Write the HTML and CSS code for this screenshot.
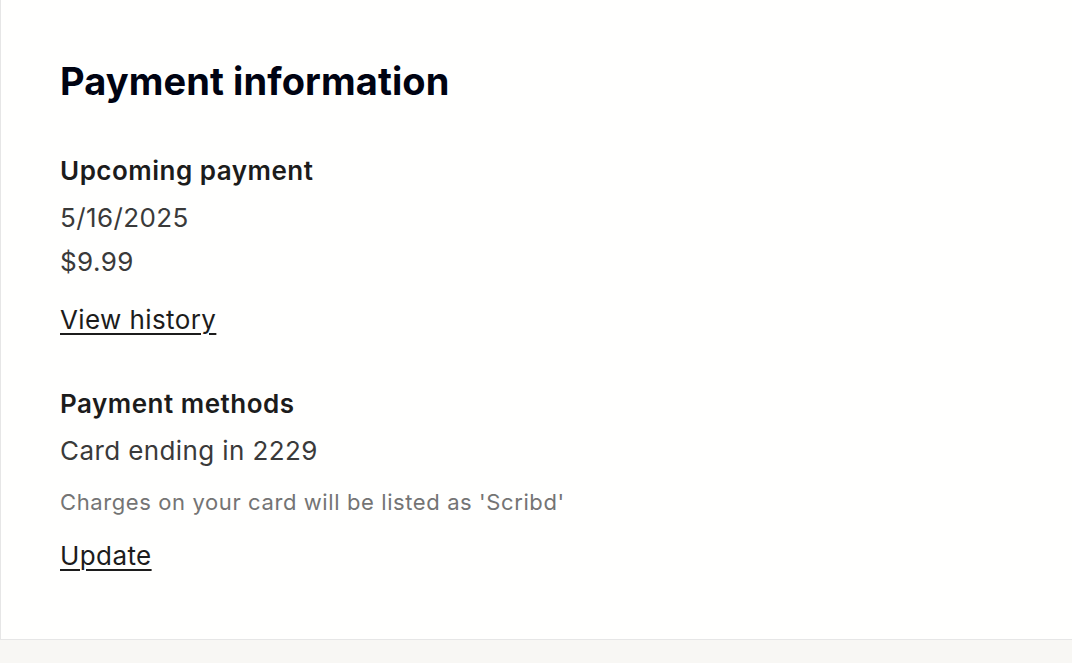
FILE: index.html
```html
<!DOCTYPE html>
<html lang="en">
<head>
    <meta charset="UTF-8">
    <meta name="viewport" content="width=device-width, initial-scale=1.0">
    <title>Payment information</title>
    <link rel="stylesheet" href="styles.css">
</head>
<body>
    <div class="card">
        <h1>Payment information</h1>
        <div class="section">
            <h2>Upcoming payment</h2>
            <p class="value first">5/16/2025</p>
            <p class="value">$9.99</p>
            <a class="link" href="#">View history</a>
        </div>
        <div class="section methods">
            <h2>Payment methods</h2>
            <p class="value first">Card ending in 2229</p>
            <p class="note">Charges on your card will be listed as 'Scribd'</p>
            <a class="link update" href="#">Update</a>
        </div>
    </div>
    <div class="footer"></div>
</body>
</html>
```

FILE: styles.css
```css
body {
    margin: 0;
    background-color: #f8f7f4;
    font-family: Inter, "Open Sans", Arial, sans-serif;
}
.card {
    box-sizing: border-box;
    height: 640px;
    background-color: #fffffe;
    border-left: 1px solid #e6e6e6;
    border-bottom: 1px solid #e6e6e6;
    padding: 59px 0 0 59px;
}
h1 {
    margin: 0;
    font-size: 38px;
    line-height: 44px;
    font-weight: 700;
    color: #000312;
    letter-spacing: 0.1px;
}
.section {
    display: flex;
    flex-direction: column;
    align-items: flex-start;
    margin-top: 50px;
}
.methods {
    margin-top: 48px;
}
h2 {
    margin: 0;
    font-size: 26px;
    line-height: 36px;
    font-weight: 600;
    color: #1c1c1c;
    letter-spacing: 0.5px;
}
.value {
    margin: 0;
    font-size: 26px;
    line-height: 44px;
    color: #3a3a3a;
    letter-spacing: 0.4px;
}
.value.first {
    margin-top: 7px;
}
.note {
    margin: 14px 0 0;
    font-size: 22px;
    line-height: 30px;
    color: #747474;
    letter-spacing: 0.6px;
}
.link {
    margin-top: 18px;
    font-size: 26px;
    line-height: 36px;
    color: #1c1c1c;
    letter-spacing: 0.4px;
    text-decoration: underline;
    text-decoration-thickness: 2px;
    text-underline-offset: 4px;
}
.update {
    margin-top: 21px;
}
.footer {
    height: 23px;
}
```
